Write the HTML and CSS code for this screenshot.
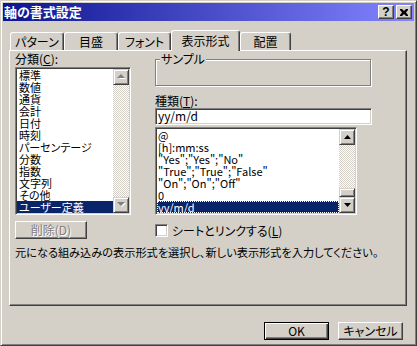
FILE: index.html
```html
<!DOCTYPE html>
<html lang="ja">
<head>
    <meta charset="UTF-8">
    <title>軸の書式設定</title>
    <link rel="stylesheet" href="styles.css">
</head>
<body>
    <div class="dialog">
        <div class="titlebar">
            <span class="title">軸の書式設定</span>
            <div class="title-buttons">
                <div class="tbtn help">?</div>
                <div class="tbtn close">
                    <svg width="8" height="7" viewBox="0 0 8 7"><path d="M0 0h2l2 2 2-2h2v1l-2 2.5 2 2.5v1h-2l-2-2-2 2h-2v-1l2-2.5-2-2.5z" fill="#000"/></svg>
                </div>
            </div>
        </div>

        <div class="tabs">
            <div class="tab w1">パターン</div>
            <div class="tab w2">目盛</div>
            <div class="tab w3">フォント</div>
            <div class="tab w4 active">表示形式</div>
            <div class="tab w5">配置</div>
        </div>

        <div class="panel">
            <div class="columns">
                <div class="col-left">
                    <div class="label">分類(<u>C</u>):</div>
                    <div class="listbox cat-list">
                        <ul class="items">
                            <li>標準</li>
                            <li>数値</li>
                            <li>通貨</li>
                            <li>会計</li>
                            <li>日付</li>
                            <li>時刻</li>
                            <li>パーセンテージ</li>
                            <li>分数</li>
                            <li>指数</li>
                            <li>文字列</li>
                            <li>その他</li>
                            <li class="selected">ユーザー定義</li>
                        </ul>
                        <div class="scrollbar">
                            <div class="sbtn">
                                <svg width="9" height="6" viewBox="0 0 9 6"><path d="M5 1l4 4H2z" fill="#fff"/><path d="M4 0l4 4H0z" fill="#808080"/></svg>
                            </div>
                            <div class="track"></div>
                            <div class="sbtn">
                                <svg width="9" height="6" viewBox="0 0 9 6"><path d="M2 1h7l-4 4z" fill="#fff"/><path d="M0 0h8l-4 4z" fill="#808080"/></svg>
                            </div>
                        </div>
                    </div>
                </div>

                <div class="col-right">
                    <div class="group">
                        <span class="legend">サンプル</span>
                    </div>
                    <div class="label type-label">種類(<u>T</u>):</div>
                    <div class="textbox">yy/m/d</div>
                    <div class="listbox fmt-list">
                        <ul class="items">
                            <li>@</li>
                            <li>[h]:mm:ss</li>
                            <li>"Yes";"Yes";"No"</li>
                            <li>"True";"True";"False"</li>
                            <li>"On";"On";"Off"</li>
                            <li>0</li>
                            <li class="selected focus">yy/m/d</li>
                        </ul>
                        <div class="scrollbar">
                            <div class="sbtn">
                                <svg width="7" height="4" viewBox="0 0 7 4"><path d="M3.5 0L7 4H0z" fill="#000"/></svg>
                            </div>
                            <div class="track"></div>
                            <div class="thumb"></div>
                            <div class="sbtn">
                                <svg width="7" height="4" viewBox="0 0 7 4"><path d="M0 0h7L3.5 4z" fill="#000"/></svg>
                            </div>
                        </div>
                    </div>
                </div>
            </div>

            <div class="actions">
                <div class="btn-cell">
                    <div class="btn disabled">削除(D)</div>
                </div>
                <div class="check">
                    <span class="checkbox"></span>
                    <span>シートとリンクする(<u>L</u>)</span>
                </div>
            </div>

            <p class="desc">元になる組み込みの表示形式を選択し、新しい表示形式を入力してください。</p>
        </div>

        <div class="footer">
            <div class="btn default">OK</div>
            <div class="btn">キャンセル</div>
        </div>
    </div>
</body>
</html>
```

FILE: styles.css
```css
* {
    box-sizing: border-box;
}
body {
    margin: 0;
    background: #d4d0c8;
    font-family: "Noto Sans CJK JP", sans-serif;
    font-size: 12px;
    font-feature-settings: "palt";
    color: #000;
}
u {
    text-decoration: underline;
    text-underline-offset: 1px;
}

/* window frame */
.dialog {
    width: 417px;
    height: 346px;
    background: #d4d0c8;
    border: 1px solid;
    border-color: #d4d0c8 #404040 #404040 #d4d0c8;
    box-shadow: inset 1px 1px #fff, inset -1px -1px #808080;
    padding: 2px;
    display: flex;
    flex-direction: column;
}
.titlebar {
    height: 18px;
    display: flex;
    align-items: center;
    justify-content: space-between;
    padding: 0 2px 0 1px;
    background: linear-gradient(90deg, #0c1490, #8484ff);
}
.title {
    color: #fff;
    font-weight: bold;
    font-size: 13px;
    line-height: 18px;
}
.title-buttons {
    display: flex;
    gap: 2px;
}
.tbtn {
    width: 16px;
    height: 14px;
    background: #d4d0c8;
    border: 1px solid;
    border-color: #fff #404040 #404040 #fff;
    box-shadow: inset -1px -1px #808080;
    display: flex;
    align-items: center;
    justify-content: center;
}
.help {
    font-family: "Liberation Sans", sans-serif;
    font-weight: bold;
    font-size: 12px;
    line-height: 12px;
}

/* tabs */
.tabs {
    margin-top: 9px;
    padding-left: 7px;
    height: 20px;
    display: flex;
    align-items: flex-end;
    position: relative;
    z-index: 1;
}
.tab {
    height: 18px;
    line-height: 17px;
    text-align: center;
    background: #d4d0c8;
    border-top: 1px solid #fff;
    border-left: 1px solid #fff;
    border-right: 1px solid #404040;
    box-shadow: inset -1px 0 #808080;
    border-radius: 3px 3px 0 0;
}
.tab.active {
    height: 21px;
    margin-bottom: -1px;
    line-height: 19px;
}
.w1 { width: 54px; }
.w2 { width: 54px; }
.w3 { width: 53px; }
.w4 { width: 69px; }
.w5 { width: 51px; }

/* tab page */
.panel {
    margin-left: 6px;
    width: 398px;
    height: 256px;
    border: 1px solid;
    border-color: #fff #404040 #404040 #fff;
    box-shadow: inset -1px -1px #808080;
    padding: 2px 0 0 5px;
}
.columns {
    display: flex;
    gap: 24px;
}
.col-left {
    width: 116px;
}
.col-right {
    width: 217px;
}
.label {
    height: 12px;
    line-height: 12px;
    margin-bottom: 2px;
}
.type-label {
    margin-top: 9px;
    margin-bottom: 1px;
}

.listbox {
    display: flex;
    background: #fff;
    border: 1px solid;
    border-color: #808080 #fff #fff #808080;
    box-shadow: inset 1px 1px #404040, inset -1px -1px #d4d0c8;
    padding: 1px;
}
.cat-list {
    height: 148px;
}
.fmt-list {
    width: 202px;
    height: 88px;
    margin-top: 2px;
}
.items {
    flex: 1;
    list-style: none;
    margin: 0;
    padding: 0;
    overflow: hidden;
}
.items li {
    height: 12px;
    line-height: 12px;
    font-size: 11px;
    padding-left: 2px;
    white-space: nowrap;
}
.fmt-list .items li {
    padding-left: 1px;
}
.items li.selected {
    background: #0a246a;
    color: #fff;
}
.items li.focus {
    outline: 1px dotted #fff;
    outline-offset: -1px;
}

.scrollbar {
    width: 16px;
    display: flex;
    flex-direction: column;
}
.sbtn {
    width: 16px;
    height: 16px;
    flex: none;
    background: #d4d0c8;
    border: 1px solid;
    border-color: #d4d0c8 #404040 #404040 #d4d0c8;
    box-shadow: inset 1px 1px #fff, inset -1px -1px #808080;
    display: flex;
    align-items: center;
    justify-content: center;
}
.track {
    flex: 1;
    background: repeating-conic-gradient(#fff 0 25%, #d4d0c8 0 50%) 0 0 / 2px 2px;
}
.thumb {
    height: 9px;
    flex: none;
    background: #d4d0c8;
    border: 1px solid;
    border-color: #d4d0c8 #404040 #404040 #d4d0c8;
    box-shadow: inset 1px 1px #fff, inset -1px -1px #808080;
}

.group {
    position: relative;
    margin-top: 6px;
    width: 216px;
    height: 27px;
    border: 1px solid #808080;
    box-shadow: inset 1px 1px #fff, 1px 1px #fff;
}
.legend {
    position: absolute;
    left: 4px;
    top: -7px;
    line-height: 12px;
    padding: 0 1px;
    background: #d4d0c8;
}
.textbox {
    width: 217px;
    height: 17px;
    background: #fff;
    border: 1px solid;
    border-color: #808080 #fff #fff #808080;
    box-shadow: inset 1px 1px #404040, inset -1px -1px #d4d0c8;
    padding: 0 2px;
    line-height: 14px;
}

.actions {
    display: flex;
    margin-top: 6px;
}
.btn-cell {
    width: 140px;
}
.btn {
    height: 18px;
    width: 65px;
    background: #d4d0c8;
    border: 1px solid;
    border-color: #fff #404040 #404040 #fff;
    box-shadow: inset -1px -1px #808080;
    text-align: center;
    line-height: 15px;
}
.btn.disabled {
    width: 72px;
    color: #808080;
    text-shadow: 1px 1px #fff;
}
.btn.default {
    border: 1px solid #000;
    box-shadow: inset 1px 1px #fff, inset -1px -1px #404040, inset -2px -2px #808080;
}
.check {
    display: flex;
    align-items: center;
    gap: 4px;
    margin-top: 3px;
    height: 13px;
    line-height: 13px;
}
.checkbox {
    width: 13px;
    height: 13px;
    background: #fff;
    border: 1px solid;
    border-color: #808080 #fff #fff #808080;
    box-shadow: inset 1px 1px #404040, inset -1px -1px #d4d0c8;
}
.desc {
    margin: 7px 0 0;
    font-size: 11.2px;
    line-height: 12px;
    white-space: nowrap;
}

.footer {
    margin-top: 16px;
    padding-right: 11px;
    display: flex;
    justify-content: flex-end;
    gap: 9px;
}
```
